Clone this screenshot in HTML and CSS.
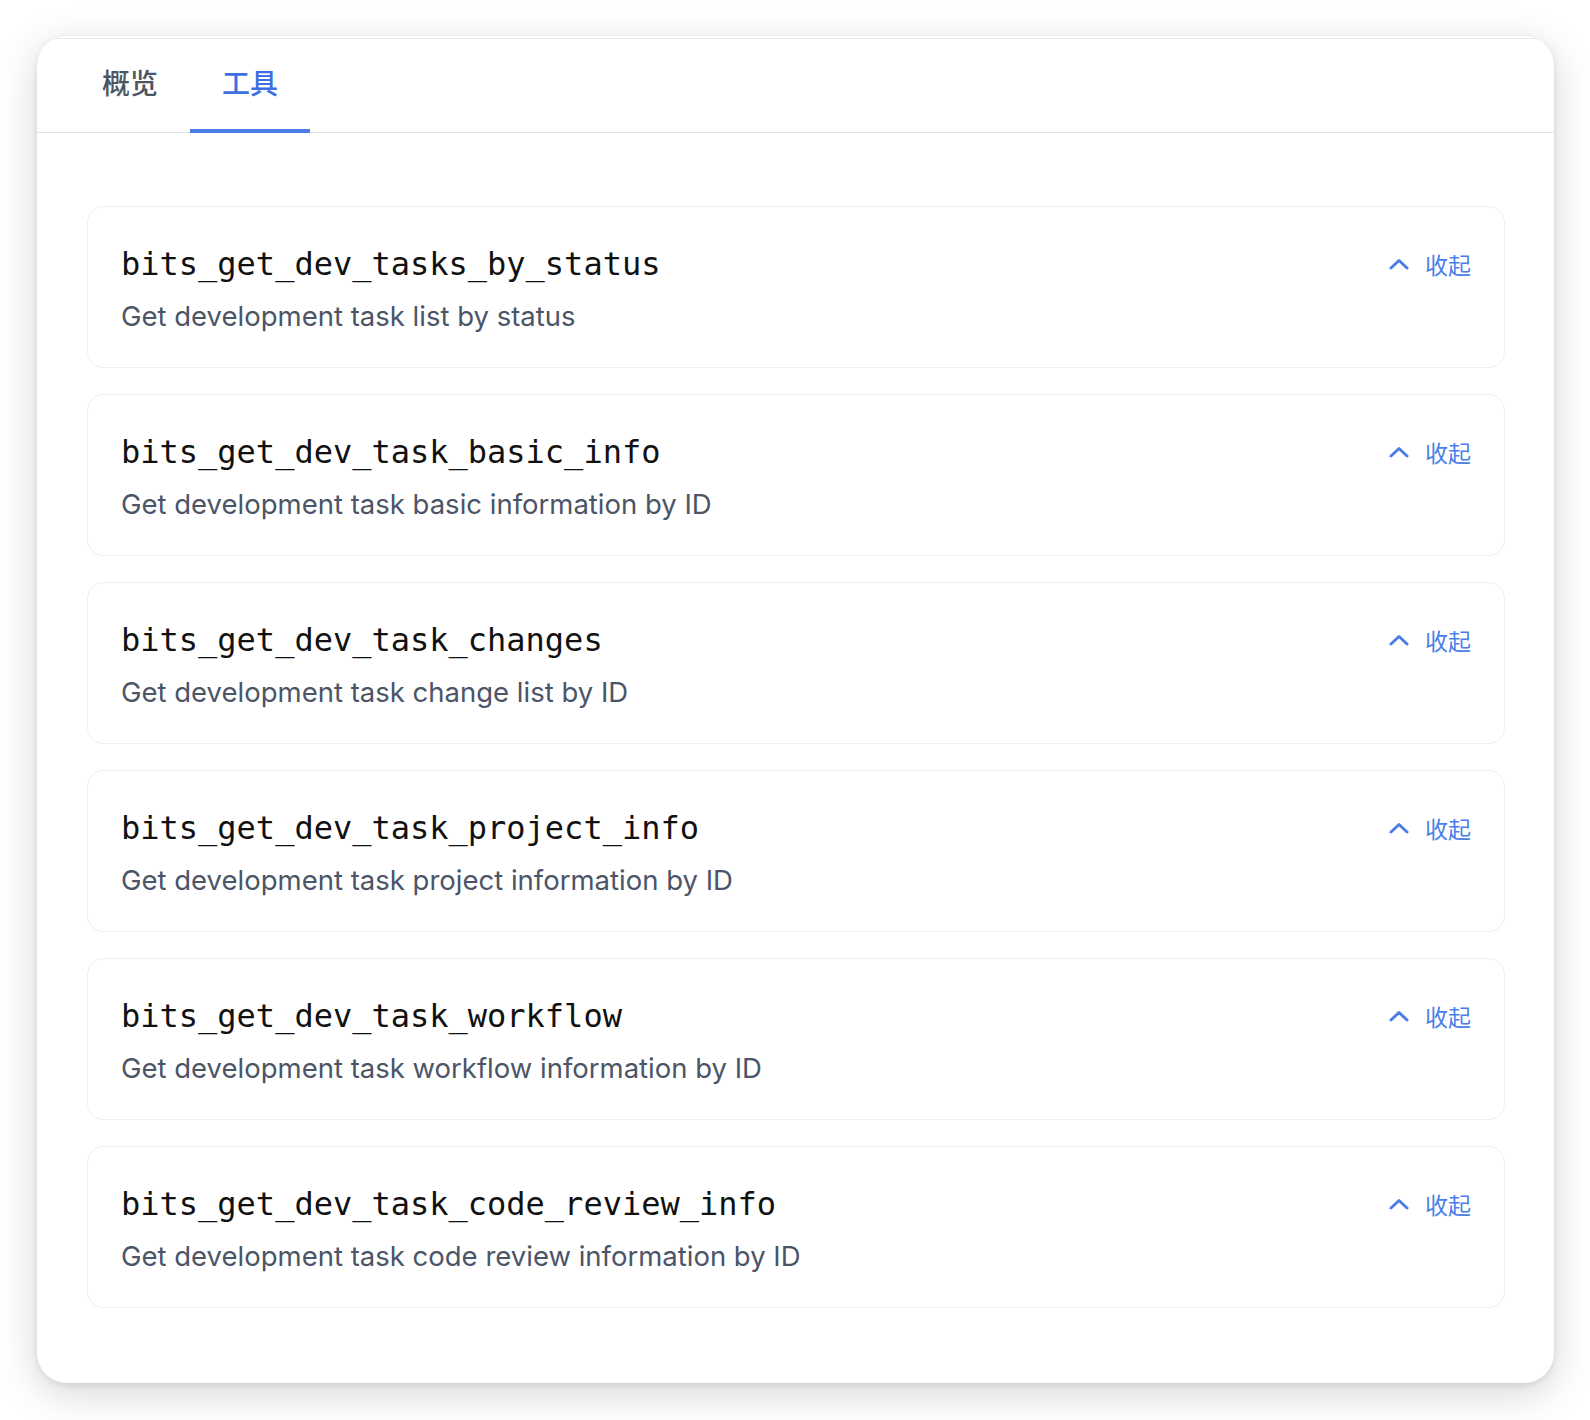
FILE: index.html
```html
<!DOCTYPE html>
<html lang="zh">
<head>
<meta charset="utf-8">
<title>工具</title>
<link rel="stylesheet" href="styles.css">
</head>
<body>
<div class="panel">
  <div class="tabs">
    <div class="tab">概览</div>
    <div class="tab active">工具</div>
  </div>
  <div class="list">
    <div class="tool">
      <div class="tool-main">
        <div class="tool-name">bits_get_dev_tasks_by_status</div>
        <div class="tool-desc">Get development task list by status</div>
      </div>
      <div class="toggle"><svg class="chev" viewBox="0 0 20 12" width="20" height="12"><path d="M2 10 L10 2.5 L18 10" fill="none" stroke="currentColor" stroke-width="3" stroke-linecap="round" stroke-linejoin="round"/></svg><span>收起</span></div>
    </div>
    <div class="tool">
      <div class="tool-main">
        <div class="tool-name">bits_get_dev_task_basic_info</div>
        <div class="tool-desc">Get development task basic information by ID</div>
      </div>
      <div class="toggle"><svg class="chev" viewBox="0 0 20 12" width="20" height="12"><path d="M2 10 L10 2.5 L18 10" fill="none" stroke="currentColor" stroke-width="3" stroke-linecap="round" stroke-linejoin="round"/></svg><span>收起</span></div>
    </div>
    <div class="tool">
      <div class="tool-main">
        <div class="tool-name">bits_get_dev_task_changes</div>
        <div class="tool-desc">Get development task change list by ID</div>
      </div>
      <div class="toggle"><svg class="chev" viewBox="0 0 20 12" width="20" height="12"><path d="M2 10 L10 2.5 L18 10" fill="none" stroke="currentColor" stroke-width="3" stroke-linecap="round" stroke-linejoin="round"/></svg><span>收起</span></div>
    </div>
    <div class="tool">
      <div class="tool-main">
        <div class="tool-name">bits_get_dev_task_project_info</div>
        <div class="tool-desc">Get development task project information by ID</div>
      </div>
      <div class="toggle"><svg class="chev" viewBox="0 0 20 12" width="20" height="12"><path d="M2 10 L10 2.5 L18 10" fill="none" stroke="currentColor" stroke-width="3" stroke-linecap="round" stroke-linejoin="round"/></svg><span>收起</span></div>
    </div>
    <div class="tool">
      <div class="tool-main">
        <div class="tool-name">bits_get_dev_task_workflow</div>
        <div class="tool-desc">Get development task workflow information by ID</div>
      </div>
      <div class="toggle"><svg class="chev" viewBox="0 0 20 12" width="20" height="12"><path d="M2 10 L10 2.5 L18 10" fill="none" stroke="currentColor" stroke-width="3" stroke-linecap="round" stroke-linejoin="round"/></svg><span>收起</span></div>
    </div>
    <div class="tool">
      <div class="tool-main">
        <div class="tool-name">bits_get_dev_task_code_review_info</div>
        <div class="tool-desc">Get development task code review information by ID</div>
      </div>
      <div class="toggle"><svg class="chev" viewBox="0 0 20 12" width="20" height="12"><path d="M2 10 L10 2.5 L18 10" fill="none" stroke="currentColor" stroke-width="3" stroke-linecap="round" stroke-linejoin="round"/></svg><span>收起</span></div>
    </div>
  </div>
</div>
</body>
</html>
```
FILE: styles.css
```css
html, body {
  margin: 0;
  padding: 0;
  background: #ffffff;
}
body {
  padding: 36px 36px 37px 37px;
  font-family: Inter, "Noto Sans CJK SC", sans-serif;
}
.panel {
  width: 1517px;
  height: 1347px;
  box-sizing: border-box;
  background: #fff;
  border-radius: 30px;
  overflow: hidden;
  box-shadow: 0 2px 6px rgba(0,0,0,0.09), 0 10px 40px rgba(0,0,0,0.17);
}
.tabs {
  margin-top: 2px;
  border-top: 1px solid #e6e6ec;
  border-bottom: 1px solid #e3e4e8;
  display: flex;
  padding-left: 33px;
  height: 95px;
  box-sizing: border-box;
}
.tab {
  width: 120px;
  display: flex;
  align-items: center;
  justify-content: center;
  font-family: "Noto Sans CJK SC", sans-serif;
  font-size: 28px;
  font-weight: 500;
  color: #4b5563;
  border-bottom: 4px solid transparent;
  margin-bottom: -1px;
  padding-bottom: 4px;
}
.tab.active {
  color: #3d6fe3;
  border-bottom-color: #4a7fe8;
}
.list {
  padding: 73px 49px 0 50px;
  display: flex;
  flex-direction: column;
  gap: 26px;
}
.tool {
  height: 162px;
  box-sizing: border-box;
  border: 1.5px solid #efeff2;
  border-radius: 16px;
  display: flex;
  justify-content: space-between;
  align-items: flex-start;
  padding: 37px 33px 0 33px;
}
.tool-name {
  font-family: "DejaVu Sans Mono", monospace;
  font-size: 32px;
  line-height: 40px;
  color: #111;
}
.tool-desc {
  margin-top: 14px;
  font-family: Inter, sans-serif;
  font-size: 27.5px;
  line-height: 36px;
  color: #4b5567;
}
.toggle {
  display: flex;
  align-items: center;
  gap: 16px;
  color: #4a7fe8;
  font-family: "Noto Sans CJK SC", sans-serif;
  font-size: 23px;
  line-height: 40px;
}
.chev {
  display: block;
}
```
